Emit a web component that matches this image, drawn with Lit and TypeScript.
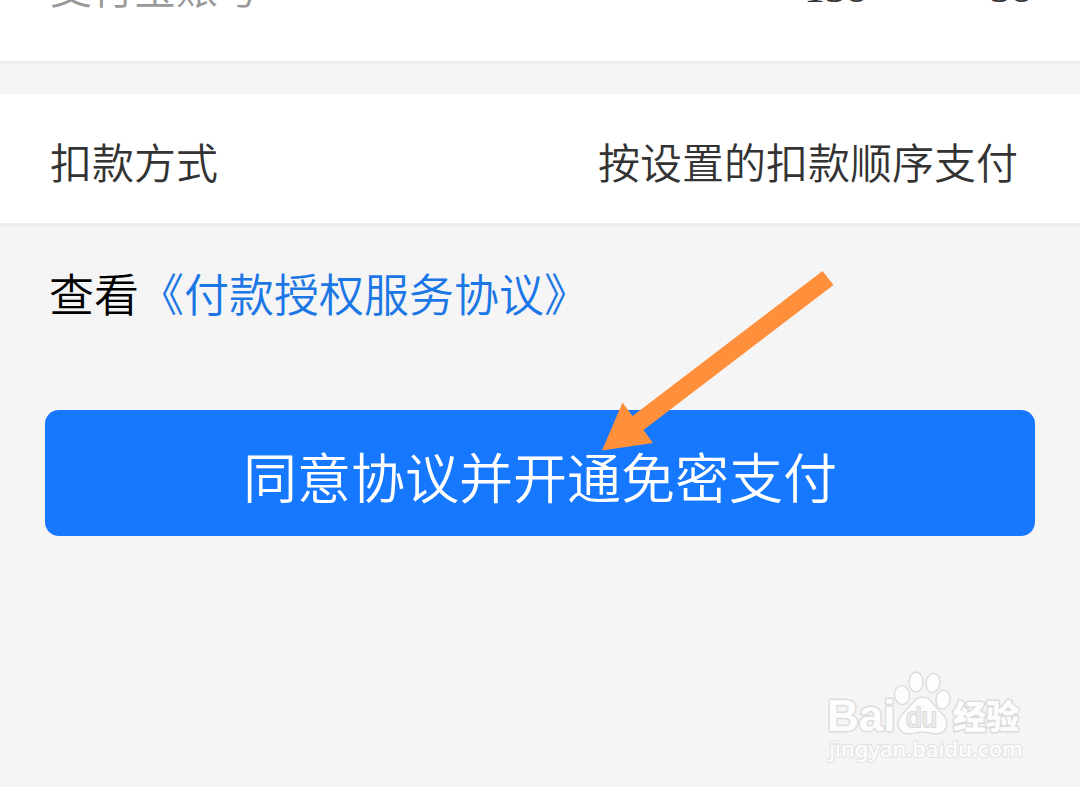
import { LitElement, html, css } from "lit";
import { customElement } from "lit/decorators.js";

@customElement("baidu-watermark")
class BaiduWatermark extends LitElement {
  static styles = css`
    :host {
      display: block;
    }
    .mark {
      display: block;
      width: 200px;
      height: 100px;
    }
    .shape {
      fill: #fdfdfd;
      stroke: #dcdcdc;
      stroke-width: 1.4;
      stroke-linejoin: round;
    }
    .text {
      fill: #fdfdfd;
      stroke: #dcdcdc;
      stroke-width: 3;
      paint-order: stroke;
      stroke-linejoin: round;
      font-family: "Liberation Sans", sans-serif;
      font-weight: 700;
    }
    .inner {
      fill: #ececec;
      stroke: #d8d8d8;
      stroke-width: 2;
      font-weight: 400;
    }
    .cjk {
      font-family: "Noto Sans CJK SC", sans-serif;
      font-weight: 900;
    }
    .site {
      font-family: "Noto Sans", sans-serif;
      font-weight: 500;
      stroke: #e2e2e2;
      stroke-width: 2;
    }
  `;

  render() {
    return html`
      <svg class="mark" viewBox="0 0 200 100" role="img" aria-label="Baidu 经验">
        <text class="text" x="1" y="63" font-size="44">Bai</text>
        <ellipse class="shape" cx="76" cy="27" rx="7.5" ry="9.5" transform="rotate(-8 76 27)" />
        <ellipse class="shape" cx="90" cy="14" rx="7" ry="10" />
        <ellipse class="shape" cx="107" cy="15" rx="7" ry="9.5" transform="rotate(10 107 15)" />
        <ellipse class="shape" cx="117" cy="31.5" rx="7" ry="9.5" transform="rotate(8 117 31.5)" />
        <path
          class="shape"
          d="M96 29C90 29 87 34 84 38C80 43 72 48 72 56C72 62 77 66 83 66C88 66 92 64 96 64C101 64 105 66 110 66C117 66 121 61 121 55C121 48 114 44 110 39C106 34 103 29 96 29Z"
        />
        <text class="text inner" x="80" y="59" font-size="28">du</text>
        <text class="text cjk" x="127" y="61" font-size="33">经验</text>
        <text class="text site" x="3" y="89" font-size="22">jingyan.baidu.com</text>
      </svg>
    `;
  }
}

@customElement("app-root")
class AppRoot extends LitElement {
  static styles = css`
    :host {
      display: block;
      font-family: "Noto Sans CJK SC", sans-serif;
      font-weight: 350;
    }
    .page {
      position: relative;
      display: flex;
      flex-direction: column;
      min-height: 100vh;
      background: #f5f5f5;
      overflow: hidden;
    }
    .row {
      display: flex;
      justify-content: space-between;
      align-items: center;
      box-sizing: border-box;
      padding: 37px 62px 32px 50px;
      background: #fff;
      border-bottom: 3px solid #ededed;
      color: #333;
      font-size: 42px;
      line-height: 60px;
    }
    .account {
      align-items: flex-end;
      height: 64px;
      margin-bottom: 30px;
      padding: 0 48px 45px 50px;
    }
    .label-muted {
      color: #999;
    }
    .number {
      display: flex;
      gap: 123px;
      font-family: "Liberation Serif", serif;
      font-weight: 400;
      line-height: 56px;
    }
    .agreement {
      margin: 0;
      padding: 34px 49px 0;
      color: #000;
      font-size: 45px;
      line-height: 66px;
    }
    .link {
      color: #1c77e6;
      text-decoration: none;
    }
    .submit {
      margin: 84px 45px 0;
      padding: 26px 0 20px;
      border: 0;
      border-radius: 14px;
      background: #1677ff;
      color: #fff;
      font: inherit;
      font-size: 54px;
      line-height: 80px;
    }
    .arrow {
      position: absolute;
      top: 270px;
      left: calc(50% + 60px);
      width: 240px;
      height: 184px;
      fill: #ff8f3a;
      pointer-events: none;
    }
    .watermark {
      position: absolute;
      right: 54px;
      bottom: 19px;
    }
  `;

  render() {
    return html`
      <main class="page">
        <section class="row account">
          <span class="label-muted">支付宝账号</span>
          <span class="number"><span>138</span><span>38</span></span>
        </section>
        <section class="row">
          <span>扣款方式</span>
          <span>按设置的扣款顺序支付</span>
        </section>
        <p class="agreement">查看<a class="link" href="#agreement">《付款授权服务协议》</a></p>
        <button class="submit" type="button">同意协议并开通免密支付</button>
        <svg class="arrow" viewBox="0 0 240 184" aria-hidden="true">
          <path d="M222.5 1L233.5 15L43.5 160L53 173L2 180.5L22.5 132.5L32.5 146Z" />
        </svg>
        <baidu-watermark class="watermark"></baidu-watermark>
      </main>
    `;
  }
}
